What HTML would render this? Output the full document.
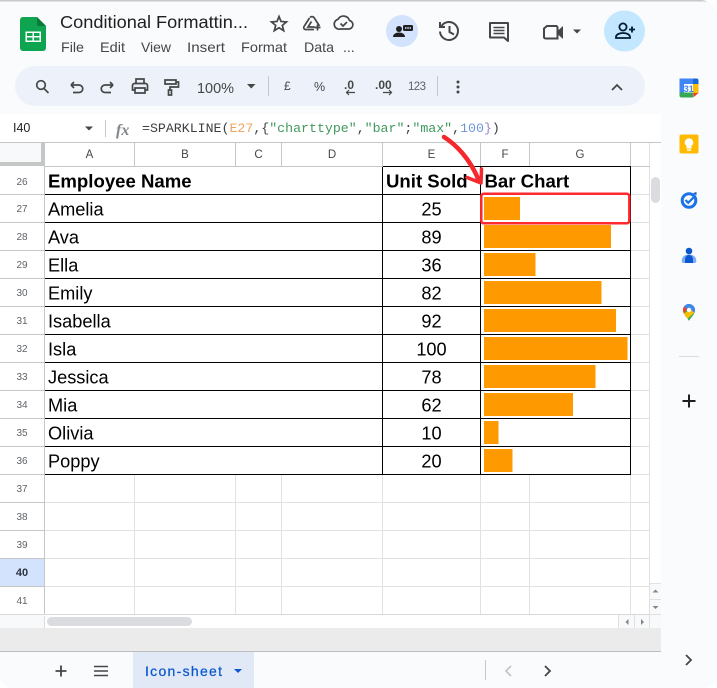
<!DOCTYPE html>
<html><head><meta charset="utf-8"><style>
html,body{margin:0;padding:0;width:717px;height:688px;overflow:hidden;background:#fff}
svg{display:block}
text{font-family:"Liberation Sans",sans-serif}
.h{font-size:11.5px;fill:#444746;text-anchor:middle}
.r{font-size:10px;fill:#5f6368;text-anchor:middle}
.c{font-size:18.2px;fill:#000}
.b{font-size:18.6px;fill:#000;font-weight:bold}
.m{font-size:14px;fill:#444746}
.f{font-family:"Liberation Mono",monospace;font-size:13.26px}
.i{fill:none;stroke:#444746;stroke-width:1.7}
</style></head><body>
<svg width="717" height="688" viewBox="0 0 717 688" xmlns="http://www.w3.org/2000/svg">
<rect width="717" height="688" fill="#f9fbfd"/>
<rect width="717" height="1.5" fill="#c9c9c9"/>
<path d="M702 0h15v15q-2-13-15-15z" fill="#fff"/>
<path d="M0 688v-12q1 11 12 12z" fill="#fff"/>
<path d="M717 688v-12q-1 11-12 12z" fill="#fff"/>

<!-- sheets logo -->
<path d="M23 17h14l9 9v22a3 3 0 0 1-3 3H23a3 3 0 0 1-3-3V20a3 3 0 0 1 3-3z" fill="#0fa44f"/>
<path d="M37 17l9 9h-7a2 2 0 0 1-2-2z" fill="#0a7a3b"/>
<path d="M25.500 31.500h15.500v10.500H25.500z" fill="#fff"/>
<path d="M27 33h5.500v3H27zM34 33h5.500v3H34zM27 37.500h5.500v3H27zM34 37.500h5.500v3H34z" fill="#0fa44f"/>

<text x="60" y="28" font-size="17.5" fill="#1f1f1f" textLength="188" lengthAdjust="spacingAndGlyphs">Conditional Formattin...</text>
<text class="m" x="61" y="52" textLength="23" lengthAdjust="spacingAndGlyphs">File</text>
<text class="m" x="100" y="52" textLength="25" lengthAdjust="spacingAndGlyphs">Edit</text>
<text class="m" x="141" y="52" textLength="30" lengthAdjust="spacingAndGlyphs">View</text>
<text class="m" x="187" y="52" textLength="38" lengthAdjust="spacingAndGlyphs">Insert</text>
<text class="m" x="241" y="52" textLength="46" lengthAdjust="spacingAndGlyphs">Format</text>
<text class="m" x="304" y="52" textLength="30" lengthAdjust="spacingAndGlyphs">Data</text>
<text class="m" x="343" y="52">...</text>

<!-- star, drive, cloud -->
<path class="i" d="M279 16.500l2 5 5.500.4-4.200 3.500 1.400 5.300-4.700-2.900-4.700 2.900 1.400-5.300-4.200-3.500 5.500-.4z"/>
<path class="i" d="M310 17.500c1-1.200 3-1.200 4 0l5.500 8.500M309.500 18l-5.500 8.500c-.7 1.500 0 3 1.500 3H314M311.500 21.500l-3.500 5.500h6.500"/>
<path d="M317.500 24.500v6M314.500 27.500h6" stroke="#444746" stroke-width="1.700"/>
<path class="i" d="M340 29h8.500a4.300 4.300 0 0 0 1-8.500 6.300 6.300 0 0 0-11.500-1.200 5 5 0 0 0 2.500 9.700z"/>
<path class="i" d="M340.500 23.500l2.500 2.500 4-4" stroke-width="1.400"/>

<circle cx="392" cy="31" r="0" fill="none"/>
<circle cx="402" cy="31" r="16" fill="#d3e3fd"/>
<circle cx="399" cy="29" r="3" fill="#1f1f1f"/>
<path d="M393 37c0-3 3-4.500 6-4.500s6 1.500 6 4.500z" fill="#1f1f1f"/>
<rect x="403" y="25" width="10" height="6" rx="1.500" fill="#1f1f1f"/>
<path d="M405 28h6" stroke="#d3e3fd" stroke-width="1.500" stroke-dasharray="1.500 .8"/>

<!-- history -->
<g fill="none" stroke="#444746" stroke-width="2">
<path d="M441.500 26a9 9 0 1 1-1.500 5.500"/>
<path d="M440 22v5h5"/>
<path d="M449.500 26v6l4.500 2.500"/>
</g>
<!-- comment -->
<path d="M490 23h18v18l-4-3.500h-14z" fill="none" stroke="#444746" stroke-width="2" stroke-linejoin="round"/>
<path d="M493.500 27.500h11M493.500 30.500h11M493.500 33.500h11" stroke="#444746" stroke-width="1.600"/>
<!-- meet -->
<path d="M547 26h9a1.500 1.500 0 0 1 1.500 1.500v11h-12a1.500 1.500 0 0 1-1.500-1.500v-8.500z" fill="none" stroke="#444746" stroke-width="2"/>
<path d="M558 30.500l5-4.500v13l-5-4.500z" fill="#444746"/>
<path d="M573 29.500h8l-4 4z" fill="#444746"/>
<circle cx="624.500" cy="31" r="20.500" fill="#c2e7ff"/>
<circle cx="623" cy="27" r="3.600" fill="none" stroke="#001d35" stroke-width="1.800"/>
<path d="M616 38v-1c0-2.500 3.500-4 7-4s7 1.500 7 4v1z" fill="none" stroke="#001d35" stroke-width="1.800"/>
<path d="M629 29.500h6M632 26.500v6" stroke="#001d35" stroke-width="1.800"/>

<!-- toolbar -->
<rect x="15" y="66" width="630" height="40" rx="20" fill="#edf2fa"/>
<circle cx="41" cy="85" r="4.300" class="i"/><path d="M44 88.500l4.500 4.500" class="i"/>
<path class="i" d="M71 85h8a3.500 3.500 0 0 1 0 7.500h-6M71 85l3-3M71 85l3 3"/>
<path class="i" d="M113 85h-8a3.500 3.500 0 0 0 0 7.500h6M113 85l-3-3M113 85l-3 3"/>
<path class="i" d="M136 84v-5h8v5M135 90h-2.500v-4.500a2 2 0 0 1 2-2h11a2 2 0 0 1 2 2V90H145M135 88h10v5h-10z"/>
<path class="i" d="M165 80h11v4h-11zM176 82h2.500v5h-8.500v3"/>
<rect x="168.500" y="90" width="3" height="5" class="i"/>
<text x="197" y="93" font-size="14.5" fill="#444746" textLength="37" lengthAdjust="spacingAndGlyphs">100%</text>
<path d="M247 84h8.500l-4.250 4.500z" fill="#444746"/>
<rect x="268" y="76" width="1" height="20" fill="#c7c7c7"/>
<text x="284" y="90" font-size="12" fill="#444746">£</text>
<text x="314" y="91" font-size="12.5" fill="#444746">%</text>
<text x="344" y="89" font-size="12" font-weight="bold" fill="#444746">.0</text>
<path d="M346 92.500h9M349 90l-2.500 2.500 2.500 2.500" fill="none" stroke="#444746" stroke-width="1.200"/>
<text x="375" y="89" font-size="12" font-weight="bold" fill="#444746">.00</text>
<path d="M391 92.500h-8M389 90l2.500 2.500-2.500 2.500" fill="none" stroke="#444746" stroke-width="1.200"/>
<text x="408" y="90" font-size="11.5" fill="#5f6368" textLength="18">123</text>
<rect x="437" y="76" width="1" height="20" fill="#c7c7c7"/>
<circle cx="458" cy="82" r="1.500" fill="#444746"/><circle cx="458" cy="87" r="1.500" fill="#444746"/><circle cx="458" cy="92" r="1.500" fill="#444746"/>
<path d="M612 90l5-5 5 5" fill="none" stroke="#444746" stroke-width="1.800"/>

<!-- formula bar -->
<rect x="0" y="114" width="661" height="28" fill="#fff"/>
<text x="13" y="132" font-size="12.5" fill="#1f1f1f">I40</text>
<path d="M85 126.500h8l-4 4z" fill="#444746"/>
<rect x="105" y="120" width="1" height="17" fill="#c7c7c7"/>
<text x="116" y="135" font-size="16" font-style="italic" fill="#80868b" style="font-family:'Liberation Serif',serif;font-weight:bold">fx</text>
<text class="f" x="142" y="132"><tspan fill="#3c4043">=SPARKLINE(</tspan><tspan fill="#f2a35c">E27</tspan><tspan fill="#3c4043">,{</tspan><tspan fill="#3f9a5c">"charttype"</tspan><tspan fill="#3c4043">,</tspan><tspan fill="#3f9a5c">"bar"</tspan><tspan fill="#3c4043">;</tspan><tspan fill="#3f9a5c">"max"</tspan><tspan fill="#3c4043">,</tspan><tspan fill="#6f94dc">100</tspan><tspan fill="#9b82cf">}</tspan><tspan fill="#3c4043">)</tspan></text>

<!-- grid -->
<rect x="0" y="142" width="661" height="473" fill="#fff"/>
<rect x="0" y="142" width="41" height="20" fill="#f8f9fa"/>
<rect x="41" y="143" width="4" height="23" fill="#c4c7c5"/>
<rect x="0" y="162" width="45" height="4" fill="#c4c7c5"/>
<rect x="0" y="142" width="661" height="1" fill="#c4c7c5"/>
<rect x="649" y="143" width="1" height="472" fill="#e1e1e1"/>
<rect x="0" y="558" width="44" height="28" fill="#d3e3fd"/>

<path d="M134.500 143V166M235.500 143V166M281.500 143V166M382.500 143V166M480.500 143V166M529.500 143V166M630.500 143V166" stroke="#c4c7c5"/>
<path d="M45 166.500H650" stroke="#c4c7c5"/>
<path d="M134.500 475V615M235.500 475V615M281.500 475V615M382.500 475V615M480.500 475V615M529.500 475V615M630.500 475V615M631 194.500H650M631 222.500H650M631 250.500H650M631 278.500H650M631 306.500H650M631 334.500H650M631 362.500H650M631 390.500H650M631 418.500H650M631 446.500H650M631 474.500H650M45 502.500H650M45 530.500H650M45 558.500H650M45 586.500H650" stroke="#e1e1e1"/>
<path d="M0 194.500H44M0 222.500H44M0 250.500H44M0 278.500H44M0 306.500H44M0 334.500H44M0 362.500H44M0 390.500H44M0 418.500H44M0 446.500H44M0 474.500H44M0 502.500H44M0 530.500H44M0 558.500H44M0 586.500H44" stroke="#c4c7c5"/>
<path d="M44.500 166V615" stroke="#c4c7c5"/>
<rect x="0" y="614" width="650" height="1.5" fill="#d9d9d9"/>

<text class="h" x="89.500" y="158">A</text>
<text class="h" x="185" y="158">B</text>
<text class="h" x="258.500" y="158">C</text>
<text class="h" x="332" y="158">D</text>
<text class="h" x="431.500" y="158">E</text>
<text class="h" x="505" y="158">F</text>
<text class="h" x="580" y="158">G</text>

<text class="r" x="22" y="185">26</text><text class="r" x="22" y="212">27</text><text class="r" x="22" y="240">28</text><text class="r" x="22" y="268">29</text><text class="r" x="22" y="296">30</text><text class="r" x="22" y="324">31</text><text class="r" x="22" y="352">32</text><text class="r" x="22" y="380">33</text><text class="r" x="22" y="408">34</text><text class="r" x="22" y="436">35</text><text class="r" x="22" y="464">36</text><text class="r" x="22" y="492">37</text><text class="r" x="22" y="520">38</text><text class="r" x="22" y="548">39</text>
<text class="r" x="22" y="576" font-weight="bold" style="fill:#2b3340;font-size:11px">40</text>
<text class="r" x="22" y="604">41</text>

<!-- bars -->
<g fill="#ff9900">
<rect x="484" y="197" width="36" height="23"/>
<rect x="484" y="225" width="127" height="23"/>
<rect x="484" y="253" width="51.5" height="23"/>
<rect x="484" y="281" width="117.5" height="23"/>
<rect x="484" y="309" width="132" height="23"/>
<rect x="484" y="337" width="143.5" height="23"/>
<rect x="484" y="365" width="111.5" height="23"/>
<rect x="484" y="393" width="89" height="23"/>
<rect x="484" y="421" width="14.5" height="23"/>
<rect x="484" y="449" width="28.500" height="23"/>
</g>

<!-- black table lines -->
<path d="M383 166.500H631M45 194.500H631M45 222.500H631M45 250.500H631M45 278.500H631M45 306.500H631M45 334.500H631M45 362.500H631M45 390.500H631M45 418.500H631M45 446.500H631M45 474.500H631M382.500 167V475M480.500 167V475M630.500 167V475" stroke="#000" fill="none"/>

<text class="b" x="48" y="187.500">Employee Name</text>
<text class="b" x="386" y="187.500">Unit Sold</text>
<text class="b" x="484.500" y="187.500">Bar Chart</text>
<g>
<text class="c" x="48" y="215.500">Amelia</text>
<text class="c" x="48" y="243.500">Ava</text>
<text class="c" x="48" y="271.500">Ella</text>
<text class="c" x="48" y="299.500">Emily</text>
<text class="c" x="48" y="327.500">Isabella</text>
<text class="c" x="48" y="355.500">Isla</text>
<text class="c" x="48" y="383.500">Jessica</text>
<text class="c" x="48" y="411.500">Mia</text>
<text class="c" x="48" y="439.500">Olivia</text>
<text class="c" x="48" y="467.500">Poppy</text>
</g>
<g text-anchor="middle">
<text class="c" x="431.500" y="215.500">25</text>
<text class="c" x="431.500" y="243.500">89</text>
<text class="c" x="431.500" y="271.500">36</text>
<text class="c" x="431.500" y="299.500">82</text>
<text class="c" x="431.500" y="327.500">92</text>
<text class="c" x="431.500" y="355.500">100</text>
<text class="c" x="431.500" y="383.500">78</text>
<text class="c" x="431.500" y="411.500">62</text>
<text class="c" x="431.500" y="439.500">10</text>
<text class="c" x="431.500" y="467.500">20</text>
</g>

<!-- red annotation -->
<rect x="481.300" y="193.800" width="148" height="29.500" rx="2.500" fill="none" stroke="#ff2a2f" stroke-width="2.500"/>
<path d="M444 137C455 144 470 158 479 181" fill="none" stroke="#f5282e" stroke-width="4.500" stroke-linecap="round"/>
<path d="M467 177.500L481 183L481.500 169" fill="none" stroke="#f5282e" stroke-width="3.500" stroke-linecap="round" stroke-linejoin="round"/>

<!-- scrollbars -->
<rect x="651" y="177" width="9" height="26" rx="4.500" fill="#dadce0"/>
<rect x="650" y="583" width="11" height="32" fill="#f8f9fa"/>
<path d="M650 583.500H661M650 599.500H661M650 614.500H661" stroke="#e1e1e1"/>
<path d="M652.500 592.500h6l-3-3z" fill="#80868b"/>
<path d="M652.500 606h6l-3 3z" fill="#80868b"/>
<rect x="0" y="615" width="661" height="13" fill="#fff"/>
<rect x="0" y="615" width="44" height="13" fill="#f8f9fa"/>
<rect x="44" y="616" width="1" height="12" fill="#dadce0"/>
<rect x="47" y="617" width="145" height="9" rx="4.500" fill="#dadce0"/>
<rect x="618" y="615" width="32" height="13" fill="#f8f9fa"/>
<path d="M618.500 615V628M634.500 615V628M649.500 615V628" stroke="#e1e1e1"/>
<path d="M628.500 619v6l-3-3z" fill="#80868b"/>
<path d="M641 619v6l3-3z" fill="#80868b"/>
<rect x="650" y="615" width="11" height="13" fill="#f8f9fa"/>

<rect x="0" y="628" width="661" height="23" fill="#ebebeb"/>
<rect x="0" y="651" width="661" height="1" fill="#bdbdbd"/>

<!-- bottom bar -->
<path d="M61 665.500v11M55.500 671h11" stroke="#444746" stroke-width="1.800"/>
<path d="M94 666.500h14M94 671h14M94 675.500h14" stroke="#444746" stroke-width="1.500"/>
<rect x="133" y="652" width="121" height="36" fill="#e1e9f7"/>
<text x="145" y="676" font-size="14" fill="#0b57d0" stroke="#0b57d0" stroke-width=".25" textLength="77">Icon-sheet</text>
<path d="M234 669h8l-4 4z" fill="#0b57d0"/>
<rect x="485" y="660" width="1" height="20" fill="#c7c7c7"/>
<path d="M511 666l-5 5 5 5" fill="none" stroke="#c4c7c5" stroke-width="1.800"/>
<path d="M545 666l5 5-5 5" fill="none" stroke="#444746" stroke-width="1.800"/>
<path d="M686 655l5 5-5 5" fill="none" stroke="#444746" stroke-width="1.800"/>

<!-- side panel -->
<rect x="679.500" y="78.500" width="19" height="19" rx="2" fill="#fff"/>
<path d="M679.500 84.500V80.500a2 2 0 0 1 2-2H695v6z" fill="#4285f4"/>
<path d="M679.500 78.500H684V93h-4.500z" fill="#4285f4"/>
<path d="M693 78.500h3.500a2 2 0 0 1 2 2V84H693z" fill="#1967d2"/>
<path d="M693 84h5.500v9H693z" fill="#fbbc04"/>
<path d="M684 92.500h9v5h-11.500a2 2 0 0 1-2-2v-3z" fill="#34a853"/>
<path d="M693 93h5.500l-5 4.500z" fill="#ea4335"/>
<rect x="684" y="84" width="9" height="8.500" fill="#fff"/>
<text x="688.700" y="92" font-size="9" font-weight="bold" fill="#4285f4" text-anchor="middle">31</text>

<rect x="679.500" y="134.500" width="19" height="19" rx="2" fill="#ffba00"/>
<circle cx="689" cy="142.500" r="4.300" fill="#fff"/>
<rect x="686.500" y="145.500" width="5" height="3" fill="#fff"/>
<rect x="687" y="149.300" width="4" height="1.500" fill="#fff"/>

<circle cx="689" cy="200.500" r="6.800" fill="none" stroke="#1a73e8" stroke-width="3"/>
<path d="M685.500 200l2.700 2.800 7-7" fill="none" stroke="#1a73e8" stroke-width="2.200"/>
<path d="M693 193l3.500-1 0 3.500z" fill="#1a5fc8"/>
<circle cx="689" cy="251" r="3.300" fill="#0b57d0"/>
<path d="M683.500 263c-2 0-2-2-1.500-4 .6-2.500 3-4.500 7-4.500s6.400 2 7 4.500c.5 2 .5 4-1.500 4z" fill="#7baaf7"/>
<path d="M685 263v-3.500c0-2.500 1.500-4.500 4-4.500s4 2 4 4.500V263z" fill="#0b57d0"/>

<path d="M689 321c-1-3-6-6-6-11a6 6 0 0 1 12 0c0 5-5 8-6 11z" fill="#34a853"/>
<path d="M684 306.500a6 6 0 0 0-1 3.500c0 1.200.3 2.200.8 3.200l3.500-4z" fill="#ea4335"/>
<path d="M684 306.500a6 6 0 0 1 5-2.500c1 0 1.800.2 2.600.7l-4.300 4z" fill="#4285f4"/>
<path d="M691.600 304.700a6 6 0 0 1 3.400 5.300c0 1-.3 2-.7 2.800l-5.300-4.800z" fill="#4285f4"/>
<path d="M683.800 313.200c1 2 2.700 3.800 3.700 5.500l6.800-5.900-3.300-3z" fill="#fbbc04"/>
<circle cx="689" cy="310" r="2.200" fill="#fff"/>

<rect x="679" y="356" width="20" height="1" fill="#dadce0"/>
<path d="M689 394.500v13M682.500 401h13" stroke="#1f1f1f" stroke-width="2"/>
</svg>
</body></html>
